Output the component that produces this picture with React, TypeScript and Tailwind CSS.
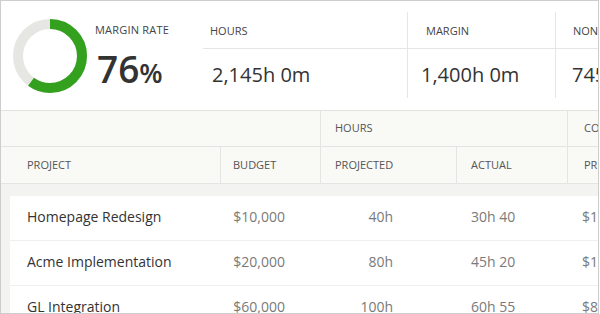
import React from "react";

const rows = [
  { name: "Homepage Redesign", budget: "$10,000", projected: "40h", actual: "30h 40", cost: "$12,400" },
  { name: "Acme Implementation", budget: "$20,000", projected: "80h", actual: "45h 20", cost: "$12,000" },
  { name: "GL Integration", budget: "$60,000", projected: "100h", actual: "60h 55", cost: "$8,200" },
];

const Donut = () => {
  const r = 32;
  const c = 2 * Math.PI * r;
  return (
    <svg width="74" height="74" viewBox="0 0 74 74">
      <circle cx="37" cy="37" r={r} fill="none" stroke="#e6e6e3" strokeWidth="10" />
      <circle
        cx="37"
        cy="37"
        r={r}
        fill="none"
        stroke="#33a01e"
        strokeWidth="10"
        strokeDasharray={`${c * 0.6} ${c}`}
        transform="rotate(-90 37 37)"
      />
    </svg>
  );
};

export default function App() {
  return (
    <div
      className="h-[314px] w-[599px] overflow-hidden border border-[#cdcdcd] bg-white text-[#333]"
      style={{ fontFamily: '"Open Sans", "Noto Sans", sans-serif' }}
    >
      {/* Summary */}
      <section className="flex h-[110px] border-b border-[#e2e2e0]">
        <div className="flex w-[202px] shrink-0 items-start">
          <div className="ml-[12px] mt-[18px]">
            <Donut />
          </div>
          <div className="ml-[8px] mt-[19px]">
            <div className="text-[11px] leading-[20px] tracking-[0.2px] text-[#444]">MARGIN RATE</div>
            <div className="ml-[2px] mt-[10px] flex items-baseline font-semibold leading-none text-[#333]">
              <span className="text-[37px]">76</span>
              <span className="text-[27px]">%</span>
            </div>
          </div>
        </div>

        <div className="flex flex-1 pb-[12px] pt-[11px]">
          <div className="w-[204px] shrink-0">
            <div className="flex h-[37px] items-center border-b border-[#e6e6e4] pl-[7px] pt-[2px] text-[11px] text-[#444]">HOURS</div>
            <div className="flex h-[50px] items-center pl-[9px] pt-[1px] text-[20px] leading-none">2,145h 0m</div>
          </div>
          <div className="w-[148px] shrink-0 border-l border-[#e6e6e4]">
            <div className="flex h-[37px] items-center border-b border-[#e6e6e4] pl-[18px] pt-[2px] text-[11px] text-[#444]">MARGIN</div>
            <div className="flex h-[50px] items-center pl-[13px] pt-[1px] text-[20px] leading-none">1,400h 0m</div>
          </div>
          <div className="flex-1 border-l border-[#e6e6e4]">
            <div className="flex h-[37px] items-center whitespace-nowrap border-b border-[#e6e6e4] pl-[17px] pt-[2px] text-[11px] text-[#444]">NON BILLABLE</div>
            <div className="flex h-[50px] items-center whitespace-nowrap pl-[16px] pt-[1px] text-[20px] leading-none">745h 0m</div>
          </div>
        </div>
      </section>

      {/* Table header */}
      <section className="bg-[#f9f9f6] text-[11px] text-[#555]">
        <div className="grid h-[36px] grid-cols-[319px_247px_1fr] border-b border-[#e4e4e2]">
          <div />
          <div className="flex items-center border-l border-[#e4e4e2] pl-[14px]">HOURS</div>
          <div className="flex items-center whitespace-nowrap border-l border-[#e4e4e2] pl-[16px]">COST</div>
        </div>
        <div className="grid h-[37px] grid-cols-[219px_100px_136px_111px_1fr] border-b border-[#e4e4e2]">
          <div className="flex items-center pl-[26px]">PROJECT</div>
          <div className="flex items-center border-l border-[#e4e4e2] pl-[12px]">BUDGET</div>
          <div className="flex items-center border-l border-[#e4e4e2] pl-[14px]">PROJECTED</div>
          <div className="flex items-center border-l border-[#e4e4e2] pl-[14px]">ACTUAL</div>
          <div className="flex items-center whitespace-nowrap border-l border-[#e4e4e2] pl-[16px]">PROJECTED</div>
        </div>
      </section>

      {/* Body */}
      <section className="h-full bg-[#f3f3f2] pl-[9px] pt-[12px]">
        <div className="bg-white">
          {rows.map((row) => (
            <div
              key={row.name}
              className="grid h-[45px] grid-cols-[210px_100px_136px_111px_1fr] items-center border-b border-[#f0f0ee] pb-[4px] text-[14px]"
            >
              <div className="pl-[17px] text-[#333]">{row.name}</div>
              <div className="pr-[35px] text-right text-[#7a7a7a]">{row.budget}</div>
              <div className="pr-[63px] text-right text-[#7a7a7a]">{row.projected}</div>
              <div className="pl-[15px] text-[#7a7a7a]">{row.actual}</div>
              <div className="whitespace-nowrap pl-[15px] text-[#7a7a7a]">{row.cost}</div>
            </div>
          ))}
        </div>
      </section>
    </div>
  );
}
